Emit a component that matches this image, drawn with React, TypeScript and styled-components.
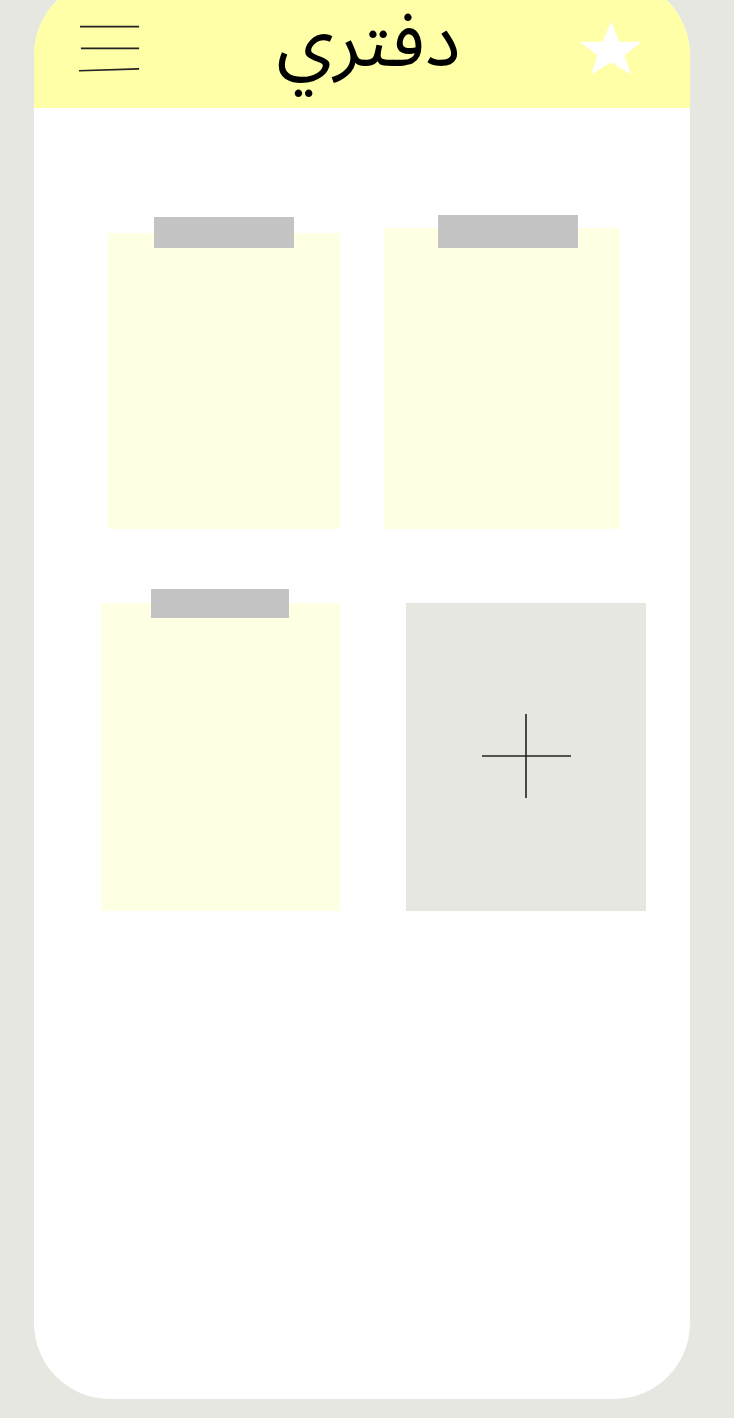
import React from "react";
import styled, { createGlobalStyle } from "styled-components";

const Global = createGlobalStyle`
  html, body {
    margin: 0;
    padding: 0;
    background: #e7e7e1;
    overflow: hidden;
  }
  body {
    font-family: "DejaVu Sans", "Noto Sans", sans-serif;
  }
`;

const Page = styled.div`
  width: 734px;
  height: 1418px;
  box-sizing: border-box;
  padding-left: 34px;
  display: flex;
  align-items: flex-start;
`;

const Phone = styled.div`
  width: 656px;
  height: 1420px;
  margin-top: -21px;
  background: #ffffff;
  border-radius: 76px;
  overflow: hidden;
  display: flex;
  flex-direction: column;
`;

const Header = styled.header`
  height: 129px;
  box-sizing: border-box;
  padding: 21px 48px 12px 45px;
  background: #ffffa8;
  display: flex;
  align-items: center;
  justify-content: space-between;
`;

const Title = styled.h1`
  margin: -12px 0 0 16px;
  font-family: "Noto Sans Arabic", "Noto Sans Arabic UI", "DejaVu Sans", sans-serif;
  font-weight: normal;
  font-size: 75px;
  line-height: 84px;
  color: #000;
  direction: rtl;
`;

const IconBox = styled.div`
  width: 62px;
  height: 56px;
  display: flex;
  align-items: center;
  justify-content: center;
`;

const Grid = styled.main`
  display: grid;
  grid-template-columns: 328px 328px;
  align-items: start;
`;

const Sheet = styled.div<{ $w: number; $h: number; $x: number; $y: number; $bg: string }>`
  position: relative;
  box-sizing: border-box;
  width: ${(p) => p.$w}px;
  height: ${(p) => p.$h}px;
  margin-left: ${(p) => p.$x}px;
  margin-top: ${(p) => p.$y}px;
  background: ${(p) => p.$bg};
  display: flex;
  align-items: center;
  justify-content: center;
`;

const Tape = styled.div<{ $l: number; $t: number; $w: number; $h: number }>`
  position: absolute;
  left: ${(p) => p.$l}px;
  top: ${(p) => p.$t}px;
  width: ${(p) => p.$w}px;
  height: ${(p) => p.$h}px;
  background: #c4c4c4;
`;

const AddButton = styled.button`
  border: 0;
  padding: 0;
  background: transparent;
  width: 92px;
  height: 88px;
  margin: 2px 0 0 0;
  cursor: pointer;
  display: flex;
  align-items: center;
  justify-content: center;
`;

const Menu = () => (
  <svg width="64" height="56" viewBox="0 0 64 56">
    <line x1="1" y1="6" x2="62" y2="6" stroke="#222" strokeWidth="1.8" />
    <line x1="2" y1="28.5" x2="62" y2="28.5" stroke="#222" strokeWidth="1.8" />
    <line x1="0" y1="51.5" x2="62" y2="49.5" stroke="#222" strokeWidth="1.7" />
  </svg>
);

const Star = () => (
  <svg width="62" height="56" viewBox="580 20 62 56">
    <polygon
      points="611,21.7 619.5,41.7 642,41.7 624.5,55.5 631,74.5 611,62.5 591,74.5 597.5,55.5 580,41.7 602.5,41.7"
      fill="#ffffff"
    />
  </svg>
);

const Plus = () => (
  <svg width="92" height="88" viewBox="0 0 92 88">
    <line x1="2" y1="42" x2="91" y2="42" stroke="#222" strokeWidth="1.6" />
    <line x1="46" y1="0" x2="46" y2="84" stroke="#222" strokeWidth="1.6" />
  </svg>
);

const notes = [
  { w: 232, h: 296, x: 74, y: 125, tape: { l: 46, t: -16, w: 140, h: 31 } },
  { w: 236, h: 301, x: 22, y: 120, tape: { l: 54, t: -13, w: 140, h: 33 } },
  { w: 239, h: 308, x: 67, y: 74, tape: { l: 50, t: -14, w: 138, h: 29 } },
];

export default function App() {
  return (
    <>
      <Global />
      <Page>
        <Phone>
          <Header>
            <IconBox>
              <Menu />
            </IconBox>
            <Title>دفتري</Title>
            <IconBox>
              <Star />
            </IconBox>
          </Header>
          <Grid>
            {notes.map((n, i) => (
              <Sheet key={i} $w={n.w} $h={n.h} $x={n.x} $y={n.y} $bg="#ffffe3">
                <Tape $l={n.tape.l} $t={n.tape.t} $w={n.tape.w} $h={n.tape.h} />
              </Sheet>
            ))}
            <Sheet $w={240} $h={308} $x={44} $y={74} $bg="#e7e7e1">
              <AddButton aria-label="add">
                <Plus />
              </AddButton>
            </Sheet>
          </Grid>
        </Phone>
      </Page>
    </>
  );
}
